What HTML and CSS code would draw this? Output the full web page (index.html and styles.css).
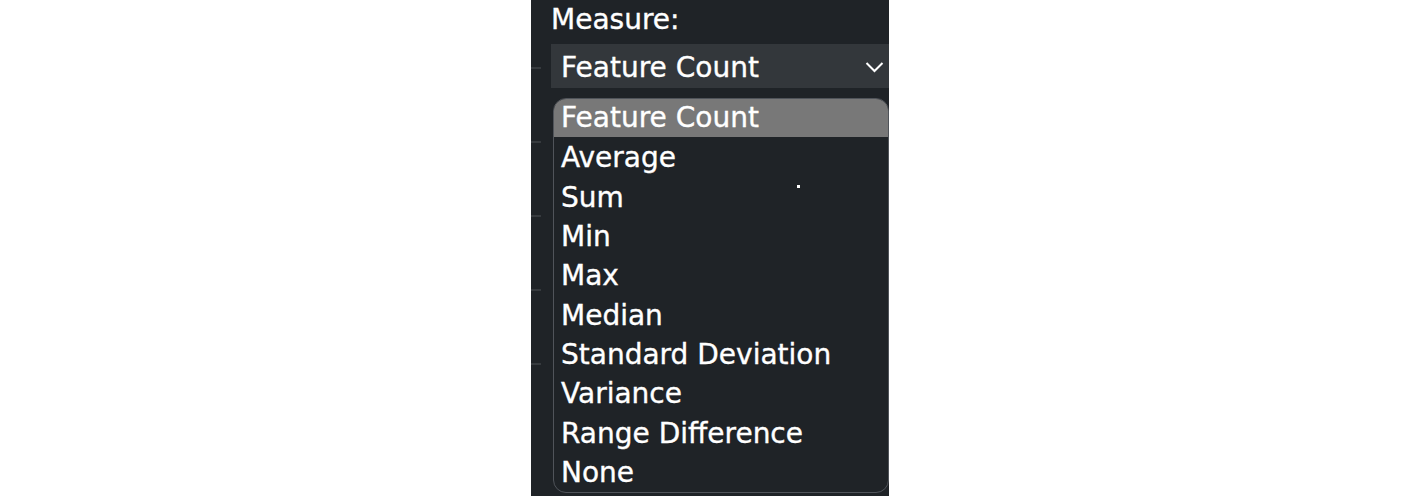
FILE: index.html
```html
<!DOCTYPE html>
<html lang="en">
<head>
<meta charset="utf-8">
<title>Measure</title>
<link rel="stylesheet" href="styles.css">
</head>
<body>
<div class="page">
  <div class="panel">
    <div class="strip">
      <span class="tick"></span>
      <span class="tick"></span>
      <span class="tick"></span>
      <span class="tick"></span>
      <span class="tick"></span>
    </div>
    <div class="content">
      <div class="label">Measure:</div>
      <div class="select">
        <span class="select-text">Feature Count</span>
        <svg class="chevron" width="19" height="12" viewBox="0 0 19 12"><path d="M1.5 2 L9.5 10 L17.5 2" fill="none" stroke="#ffffff" stroke-width="2"/></svg>
      </div>
      <div class="menu">
        <div class="option selected">Feature Count</div>
        <div class="option">Average</div>
        <div class="option">Sum<span class="dot"></span></div>
        <div class="option">Min</div>
        <div class="option">Max</div>
        <div class="option">Median</div>
        <div class="option">Standard Deviation</div>
        <div class="option">Variance</div>
        <div class="option">Range Difference</div>
        <div class="option">None</div>
      </div>
    </div>
  </div>
</div>
</body>
</html>
```
FILE: styles.css
```css
html, body {
  margin: 0;
  padding: 0;
  background: #ffffff;
}
.page {
  display: flex;
  width: 1418px;
  height: 496px;
  overflow: hidden;
}
.panel {
  margin-left: 531px;
  width: 358px;
  height: 496px;
  background: #1f2327;
  display: flex;
  overflow: hidden;
  font-family: "DejaVu Sans", "Liberation Sans", sans-serif;
  font-size: 28px;
  color: #ffffff;
  -webkit-text-stroke: 0.35px #ffffff;
}
.strip {
  width: 10px;
  flex: none;
  display: flex;
  flex-direction: column;
  padding-top: 67px;
  gap: 72px;
}
.tick {
  display: block;
  height: 2px;
  background: #363a3e;
}
.content {
  margin-left: 10px;
  flex: 1;
  display: flex;
  flex-direction: column;
  min-width: 0;
}
.label {
  line-height: 40px;
  height: 40px;
  margin-bottom: 4px;
}
.select {
  height: 44px;
  background: #33373b;
  display: flex;
  align-items: center;
  justify-content: space-between;
  padding-left: 10px;
  padding-right: 5px;
}
.select-text {
  line-height: 44px;
  padding-top: 3px;
}
.chevron {
  display: block;
  margin-top: 1px;
}
.menu {
  margin-top: 10px;
  margin-left: 2px;
  border: 1px solid #50545a;
  border-radius: 13px;
  overflow: hidden;
  background: #1f2327;
}
.option {
  height: 39.33px;
  line-height: 39.33px;
  padding-left: 7px;
  white-space: nowrap;
  position: relative;
}
.option.selected {
  background: #787878;
  height: 37.7px;
  margin-bottom: 1.63px;
  line-height: 37.7px;
}
.dot {
  position: absolute;
  left: 243px;
  top: 7px;
  width: 3px;
  height: 3px;
  background: #ffffff;
}
```
